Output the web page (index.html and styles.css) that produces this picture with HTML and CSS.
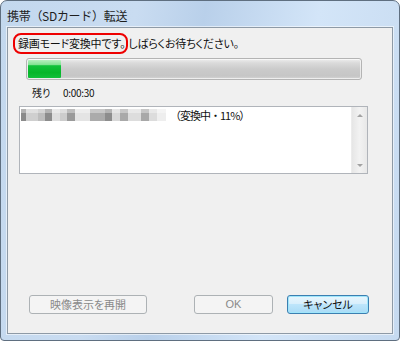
FILE: index.html
```html
<!DOCTYPE html>
<html lang="ja">
<head>
<meta charset="utf-8">
<title>携帯（SDカード）転送</title>
<link rel="stylesheet" href="styles.css">
</head>
<body>
<div class="window">
  <div class="titlebar"><span class="title">携帯（SDカード）転送</span></div>
  <div class="client">
    <p class="message"><span class="highlight">録画モード変換中です。</span>しばらくお待ちください。</p>
    <div class="progress"><div class="progress-fill" style="width:10%"></div></div>
    <div class="remaining"><span class="label">残り</span><span class="time">0:00:30</span></div>
    <div class="listbox">
      <div class="list-body">
        <div class="list-row"><span class="redacted"></span><span class="status">（変換中・11%）</span></div>
      </div>
      <div class="scrollbar">
        <span class="arrow up"></span>
        <span class="arrow down"></span>
      </div>
    </div>
    <div class="buttons">
      <button class="btn btn-resume" disabled>映像表示を再開</button>
      <button class="btn btn-ok" disabled>OK</button>
      <button class="btn btn-cancel">キャンセル</button>
    </div>
  </div>
</div>
</body>
</html>
```

FILE: styles.css
```css
html, body {
  margin: 0;
  padding: 0;
  background: #ffffff;
}

body {
  width: 400px;
  height: 341px;
  overflow: hidden;
  font-family: "Noto Sans CJK JP", "Noto Sans", sans-serif;
  font-feature-settings: "palt";
  color: #1a1a1a;
}

.window {
  box-sizing: border-box;
  width: 400px;
  height: 341px;
  border: 1px solid #5f6f80;
  border-radius: 7px 7px 4px 4px;
  background: linear-gradient(100deg, #c3d8ee 0%, #c9dcf1 30%, #b9d0ea 45%, #d3e5f8 70%, #c6daf0 100%);
  padding: 0 6px 6px 6px;
  display: flex;
  flex-direction: column;
}

.titlebar {
  height: 26px;
  display: flex;
  align-items: center;
  padding-left: 0;
}

.title {
  font-size: 12px;
  color: #1e1e1e;
  font-feature-settings: normal;
  letter-spacing: -0.3px;
  margin-top: 2px;
}

.client {
  flex: 1;
  box-sizing: border-box;
  border: 1px solid #8e9aa6;
  box-shadow: 0 0 0 1px rgba(255, 255, 255, 0.55);
  background: #f0f0f0;
  display: flex;
  flex-direction: column;
  padding: 5px 0 0 5px;
}

.message {
  margin: 0;
  font-size: 11px;
  line-height: 17px;
  color: #111;
  white-space: nowrap;
  letter-spacing: -0.2px;
}

.highlight {
  display: inline-block;
  border: 2px solid #ee0000;
  border-radius: 8px;
  padding: 0 1px 0 3px;
  line-height: 17px;
}

.progress {
  box-sizing: border-box;
  width: 336px;
  height: 22px;
  margin: 4px 0 0 13px;
  border: 1px solid #b4b4b4;
  border-radius: 3px;
  background: linear-gradient(#eeeeee 0%, #dadada 20%, #cbcbcb 50%, #c6c6c6 85%, #d6d6d6 100%);
  box-shadow: inset 0 0 0 1px rgba(255, 255, 255, 0.6);
  padding: 1px;
  display: flex;
}

.progress-fill {
  height: 100%;
  border-radius: 1px;
  background: linear-gradient(#b7f0c0 0%, #84e394 25%, #10c23a 32%, #06b62a 70%, #12c03a 100%);
}

.remaining {
  display: flex;
  align-items: center;
  height: 12px;
  margin: 6px 0 0 19px;
  font-size: 10px;
  color: #111;
}

.label {
  width: 31px;
}

.time {
  letter-spacing: -0.3px;
}

.listbox {
  box-sizing: border-box;
  width: 349px;
  height: 68px;
  margin: 8px 0 0 6px;
  border: 1px solid #b0b4ba;
  background: #ffffff;
  display: flex;
}

.list-body {
  flex: 1;
  padding: 1px 0 0 1px;
}

.list-row {
  display: flex;
  align-items: center;
  height: 13px;
}

.redacted {
  width: 145px;
  height: 12px;
  margin-right: 4px;
  background:
    linear-gradient(rgba(255, 255, 255, 0.35) 0, rgba(255, 255, 255, 0.35) 4px, transparent 4px),
    linear-gradient(90deg,
      #8a8a8a 0 5px,
      #cfcfcf 5px 17px,
      #bdbdbd 17px 24px,
      #8c8c8c 24px 31px,
      #dedede 31px 39px,
      #cccccc 39px 46px,
      #9a9a9a 46px 54px,
      #e4e4e4 54px 69px,
      #ababab 69px 84px,
      #8d8d8d 84px 91px,
      #d8d8d8 91px 99px,
      #a9a9a9 99px 107px,
      #dddddd 107px 120px,
      #a8a8a8 120px 128px,
      #dcdcdc 128px 136px,
      #eeeeee 136px 145px);
}

.status {
  font-size: 11px;
  color: #111;
  white-space: nowrap;
  font-feature-settings: normal;
  letter-spacing: -1px;
}

.scrollbar {
  width: 16px;
  background: linear-gradient(90deg, #e6e6e6, #f2f2f2 50%, #e8e8e8);
  border-left: 1px solid #ececec;
  display: flex;
  flex-direction: column;
  justify-content: space-between;
  align-items: center;
  padding: 7px 0 6px;
  box-sizing: border-box;
}

.arrow {
  width: 0;
  height: 0;
  border-left: 3px solid transparent;
  border-right: 3px solid transparent;
}

.arrow.up {
  border-bottom: 3px solid #a2a2a2;
}

.arrow.down {
  border-top: 3px solid #a2a2a2;
}

.buttons {
  margin-top: auto;
  margin-bottom: 19px;
  margin-left: 16px;
  display: flex;
}

.btn {
  box-sizing: border-box;
  height: 19px;
  padding: 0;
  border: 1px solid #adb2b5;
  border-radius: 3px;
  background: #f4f4f4;
  color: #8a8a8a;
  font-family: "Noto Sans CJK JP", "Noto Sans", sans-serif;
  font-feature-settings: "palt";
  font-size: 11px;
  line-height: 17px;
}

.btn-resume {
  width: 118px;
}

.btn-ok {
  width: 79px;
  margin-left: 47px;
  font-family: "Liberation Sans", sans-serif;
}

.btn-cancel {
  width: 82px;
  margin-left: 14px;
  border-color: #3c7fb1;
  color: #111;
  background: linear-gradient(#e8f6fd 0%, #d8effc 45%, #bde5fb 50%, #a9dbf6 100%);
  box-shadow: inset 0 0 0 1px #9fe6fb;
}
```
